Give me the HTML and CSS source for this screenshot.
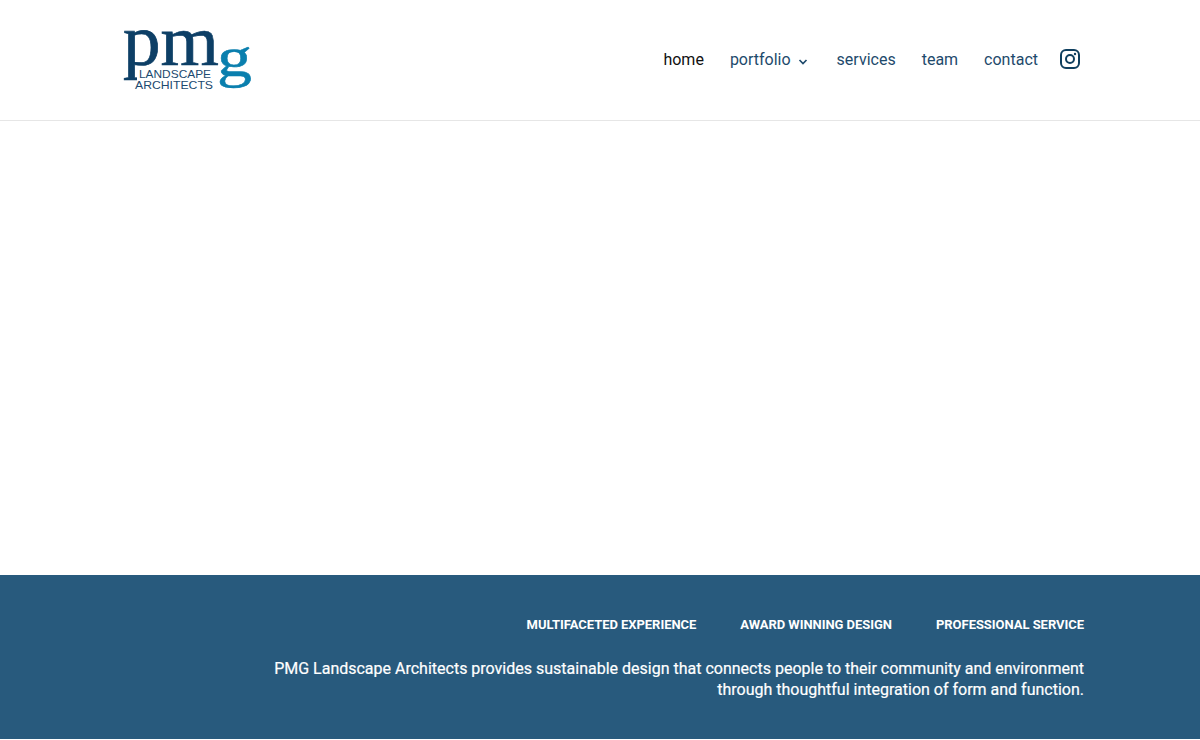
FILE: index.html
```html
<!DOCTYPE html>
<html lang="en">
<head>
<meta charset="utf-8">
<title>PMG Landscape Architects</title>
<link rel="stylesheet" href="styles.css">
</head>
<body>
<div class="page">
  <header class="site-header">
    <a class="logo" href="#" aria-label="PMG Landscape Architects">
      <svg class="logo-art" width="132" height="64" viewBox="0 0 132 64">
        <text class="logo-pm" x="-1" y="37" textLength="96" lengthAdjust="spacingAndGlyphs">pm</text>
        <rect class="logo-mask" x="13" y="39" width="80" height="14"/>
        <text class="logo-g" x="93" y="48" textLength="35" lengthAdjust="spacingAndGlyphs">g</text>
        <text class="logo-line" x="15" y="50" textLength="72" lengthAdjust="spacingAndGlyphs">LANDSCAPE</text>
        <text class="logo-line" x="11" y="61" textLength="78" lengthAdjust="spacingAndGlyphs">ARCHITECTS</text>
      </svg>
    </a>
    <nav class="nav">
      <a class="nav-link" href="#"><span class="nav-active">home</span></a>
      <a class="nav-link nav-drop" href="#">portfolio
        <svg class="chev" width="10" height="6" viewBox="0 0 10 6"><path d="M1.5 1 5 4.5 8.5 1" fill="none" stroke="#1e4a6c" stroke-width="1.7"/></svg>
      </a>
      <a class="nav-link" href="#">services</a>
      <a class="nav-link" href="#">team</a>
      <a class="nav-link" href="#">contact</a>
      <a class="insta" href="#" aria-label="Instagram">
        <svg width="20" height="20" viewBox="0 0 20 20"><rect x="1" y="1" width="18" height="18" rx="5" fill="none" stroke="#0f3f5f" stroke-width="2"/><circle cx="10" cy="10" r="4" fill="none" stroke="#0f3f5f" stroke-width="2"/><circle cx="15" cy="5" r="1.2" fill="#0f3f5f"/></svg>
      </a>
    </nav>
  </header>
  <main class="hero"></main>
  <footer class="band">
    <ul class="features">
      <li>MULTIFACETED EXPERIENCE</li>
      <li>AWARD WINNING DESIGN</li>
      <li>PROFESSIONAL SERVICE</li>
    </ul>
    <p class="blurb">PMG Landscape Architects provides sustainable design that connects people to their community and environment<br>through thoughtful integration of form and function.</p>
  </footer>
</div>
</body>
</html>
```
FILE: styles.css
```css
* { box-sizing: border-box; }
html, body { margin: 0; padding: 0; background: #fff; }
body { font-family: Roboto, "Liberation Sans", sans-serif; }
a { text-decoration: none; color: inherit; }
.page { height: 740px; display: flex; flex-direction: column; overflow: hidden; }
.site-header {
  height: 121px; flex: none; border-bottom: 1px solid #e6e6e6;
  display: flex; align-items: flex-start; justify-content: space-between;
  padding: 0 120px 0 124px;
}
.logo { display: block; margin-top: 28px; }
.logo-art { display: block; overflow: visible; }
.logo-pm { font-family: "Liberation Serif", serif; font-size: 72px; fill: #0d3f66; stroke: #0d3f66; stroke-width: 0.7px; }
.logo-mask { fill: #fff; }
.logo-g { font-family: "Liberation Serif", serif; font-size: 56px; fill: #0a7fae; stroke: #0a7fae; stroke-width: 0.5px; }
.logo-line { font-family: "Liberation Sans", sans-serif; font-size: 11.5px; fill: #1c4a70; }
.nav { display: flex; align-items: center; height: 120px; color: #1e4a6c; font-size: 16px; line-height: 24px; }
.nav-link { margin-right: 26px; }
.nav-active { color: #111; }
.nav-drop { margin-right: 29px; }
.chev { margin-left: 3px; vertical-align: 0; }
.insta { display: flex; margin-left: -4px; margin-top: -2px; }
.hero { flex: 1; background: #fff; }
.band {
  height: 164px; flex: none; margin-bottom: 1px; background: #285a7d; color: #fff;
  padding: 41px 116px 0 0; text-align: right;
}
.features { list-style: none; margin: 0; padding: 0; display: flex; justify-content: flex-end; gap: 44px; font-size: 13px; line-height: 17px; font-weight: 700; letter-spacing: -0.04px; }
.blurb { margin: 25px 0 0; font-size: 16px; line-height: 21px; -webkit-text-stroke: 0.2px #fff; }
```
